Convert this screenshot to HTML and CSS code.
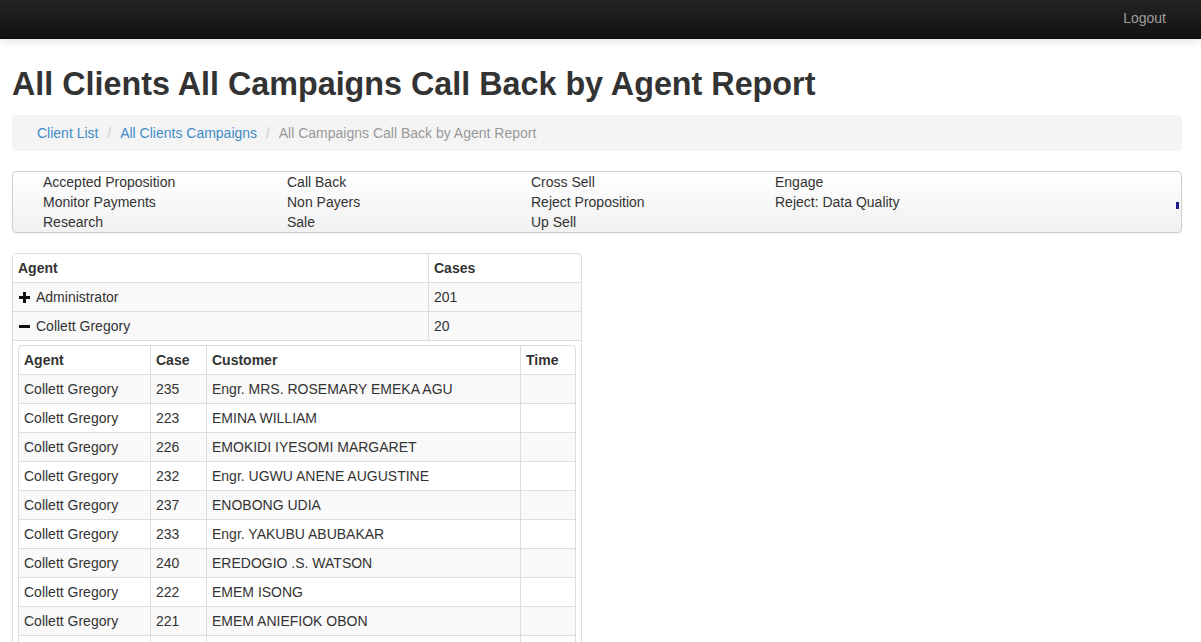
FILE: index.html
```html
<!DOCTYPE html>
<html>
<head>
<meta charset="utf-8">
<title>All Clients All Campaigns Call Back by Agent Report</title>
<link rel="stylesheet" href="styles.css">
</head>
<body>
<header class="navbar">
  <a class="nav-link" href="#">Logout</a>
</header>
<main class="page">
  <h1 class="title">All Clients All Campaigns Call Back by Agent Report</h1>
  <ol class="breadcrumb">
    <li><a href="#">Client List</a></li>
    <li><a href="#">All Clients Campaigns</a></li>
    <li class="active">All Campaigns Call Back by Agent Report</li>
  </ol>
  <div class="filters">
    <ul class="filter-list">
      <li>Accepted Proposition</li>
      <li>Call Back</li>
      <li>Cross Sell</li>
      <li>Engage</li>
      <li>Monitor Payments</li>
      <li>Non Payers</li>
      <li>Reject Proposition</li>
      <li>Reject: Data Quality</li>
      <li>Research</li>
      <li>Sale</li>
      <li>Up Sell</li>
    </ul>
    <span class="marker"></span>
  </div>
  <table class="grid outer">
    <thead>
      <tr><th class="c-agent">Agent</th><th class="c-cases">Cases</th></tr>
    </thead>
    <tbody>
      <tr class="shade">
        <td><svg class="toggle" width="11" height="11" viewBox="0 0 11 11"><rect x="4" y="0" width="3" height="11" fill="#111"/><rect x="0" y="4" width="11" height="3" fill="#111"/></svg>Administrator</td>
        <td>201</td>
      </tr>
      <tr class="shade">
        <td><svg class="toggle" width="11" height="11" viewBox="0 0 11 11"><rect x="0" y="4" width="11" height="3" fill="#111"/></svg>Collett Gregory</td>
        <td>20</td>
      </tr>
      <tr class="nested">
        <td colspan="2">
          <table class="grid inner">
            <thead>
              <tr><th class="i-agent">Agent</th><th class="i-case">Case</th><th class="i-cust">Customer</th><th class="i-time">Time</th></tr>
            </thead>
            <tbody>
              <tr class="shade"><td>Collett Gregory</td><td>235</td><td>Engr. MRS. ROSEMARY EMEKA AGU</td><td></td></tr>
              <tr><td>Collett Gregory</td><td>223</td><td>EMINA WILLIAM</td><td></td></tr>
              <tr class="shade"><td>Collett Gregory</td><td>226</td><td>EMOKIDI IYESOMI MARGARET</td><td></td></tr>
              <tr><td>Collett Gregory</td><td>232</td><td>Engr. UGWU ANENE AUGUSTINE</td><td></td></tr>
              <tr class="shade"><td>Collett Gregory</td><td>237</td><td>ENOBONG UDIA</td><td></td></tr>
              <tr><td>Collett Gregory</td><td>233</td><td>Engr. YAKUBU ABUBAKAR</td><td></td></tr>
              <tr class="shade"><td>Collett Gregory</td><td>240</td><td>EREDOGIO .S. WATSON</td><td></td></tr>
              <tr><td>Collett Gregory</td><td>222</td><td>EMEM ISONG</td><td></td></tr>
              <tr class="shade"><td>Collett Gregory</td><td>221</td><td>EMEM ANIEFIOK OBON</td><td></td></tr>
              <tr><td>&nbsp;</td><td>&nbsp;</td><td>&nbsp;</td><td>&nbsp;</td></tr>
            </tbody>
          </table>
        </td>
      </tr>
    </tbody>
  </table>
</main>
</body>
</html>
```

FILE: styles.css
```css
html, body {
  margin: 0;
  padding: 0;
  background: #fff;
}
body {
  font-family: "Liberation Sans", Arial, sans-serif;
  font-size: 14px;
  line-height: 20px;
  color: #333;
}
a { color: #428bca; text-decoration: none; }

.navbar {
  height: 38px;
  background: linear-gradient(to bottom, #242424 0%, #111 100%);
  border-bottom: 1px solid #0a0a0a;
  box-shadow: 0 2px 8px rgba(0,0,0,0.12);
  display: flex;
  justify-content: flex-end;
  align-items: center;
  padding-right: 34px;
}
.nav-link {
  color: #9d9d9d;
  font-size: 14px;
  line-height: 20px;
  margin-top: -3px;
  margin-right: 1px;
}

.page {
  width: 1170px;
  margin-left: 12px;
  padding-bottom: 40px;
}
.title {
  font-size: 32.3px;
  font-weight: bold;
  line-height: 35px;
  margin: 28px 0 13px;
  color: #333;
}

.breadcrumb {
  list-style: none;
  margin: 0 0 20px;
  padding: 8px 25px;
  background: #f4f4f4;
  border-radius: 4px;
}
.breadcrumb li { display: inline-block; }
.breadcrumb li + li::before {
  content: "/\00a0";
  padding: 0 5px;
  color: #ccc;
}
.breadcrumb .active { color: #999; }

.filters {
  position: relative;
  border: 1px solid #cfcfcf;
  border-radius: 4px;
  background: linear-gradient(to bottom, #ffffff 0%, #f1f1f1 100%);
  box-shadow: 0 1px 2px rgba(0,0,0,0.05);
  margin-bottom: 20px;
}
.filter-list {
  list-style: none;
  margin: 0;
  padding: 0 0 0 30px;
  display: grid;
  grid-template-columns: repeat(4, 244px);
}
.filter-list li { line-height: 20px; }
.marker {
  position: absolute;
  left: 1163px;
  top: 30px;
  width: 3px;
  height: 7px;
  background: #1c1c8e;
}

.grid {
  border-collapse: separate;
  border-spacing: 0;
  border: 1px solid #ddd;
  border-radius: 4px;
}
.grid th, .grid td {
  padding: 4px 5px;
  line-height: 20px;
  text-align: left;
  vertical-align: top;
  border-left: 1px solid #ddd;
  border-top: 1px solid #ddd;
}
.grid th { font-weight: bold; }
.grid tr > :first-child { border-left: 0; }
.grid thead tr:first-child > * { border-top: 0; }
.grid tr.shade > td { background: #f9f9f9; }

.outer { width: 570px; }
.c-agent { width: 405px; }
.c-cases { width: 142px; }
.nested > td { background: #fff; padding: 4px 5px 5px; }

.inner { width: 558px; }
.i-agent { width: 121px; }
.i-case { width: 45px; }
.i-cust { width: 303px; }
.i-time { width: 44px; }

.toggle {
  display: inline-block;
  vertical-align: -1px;
  margin: 0 6px 0 1px;
}
```
